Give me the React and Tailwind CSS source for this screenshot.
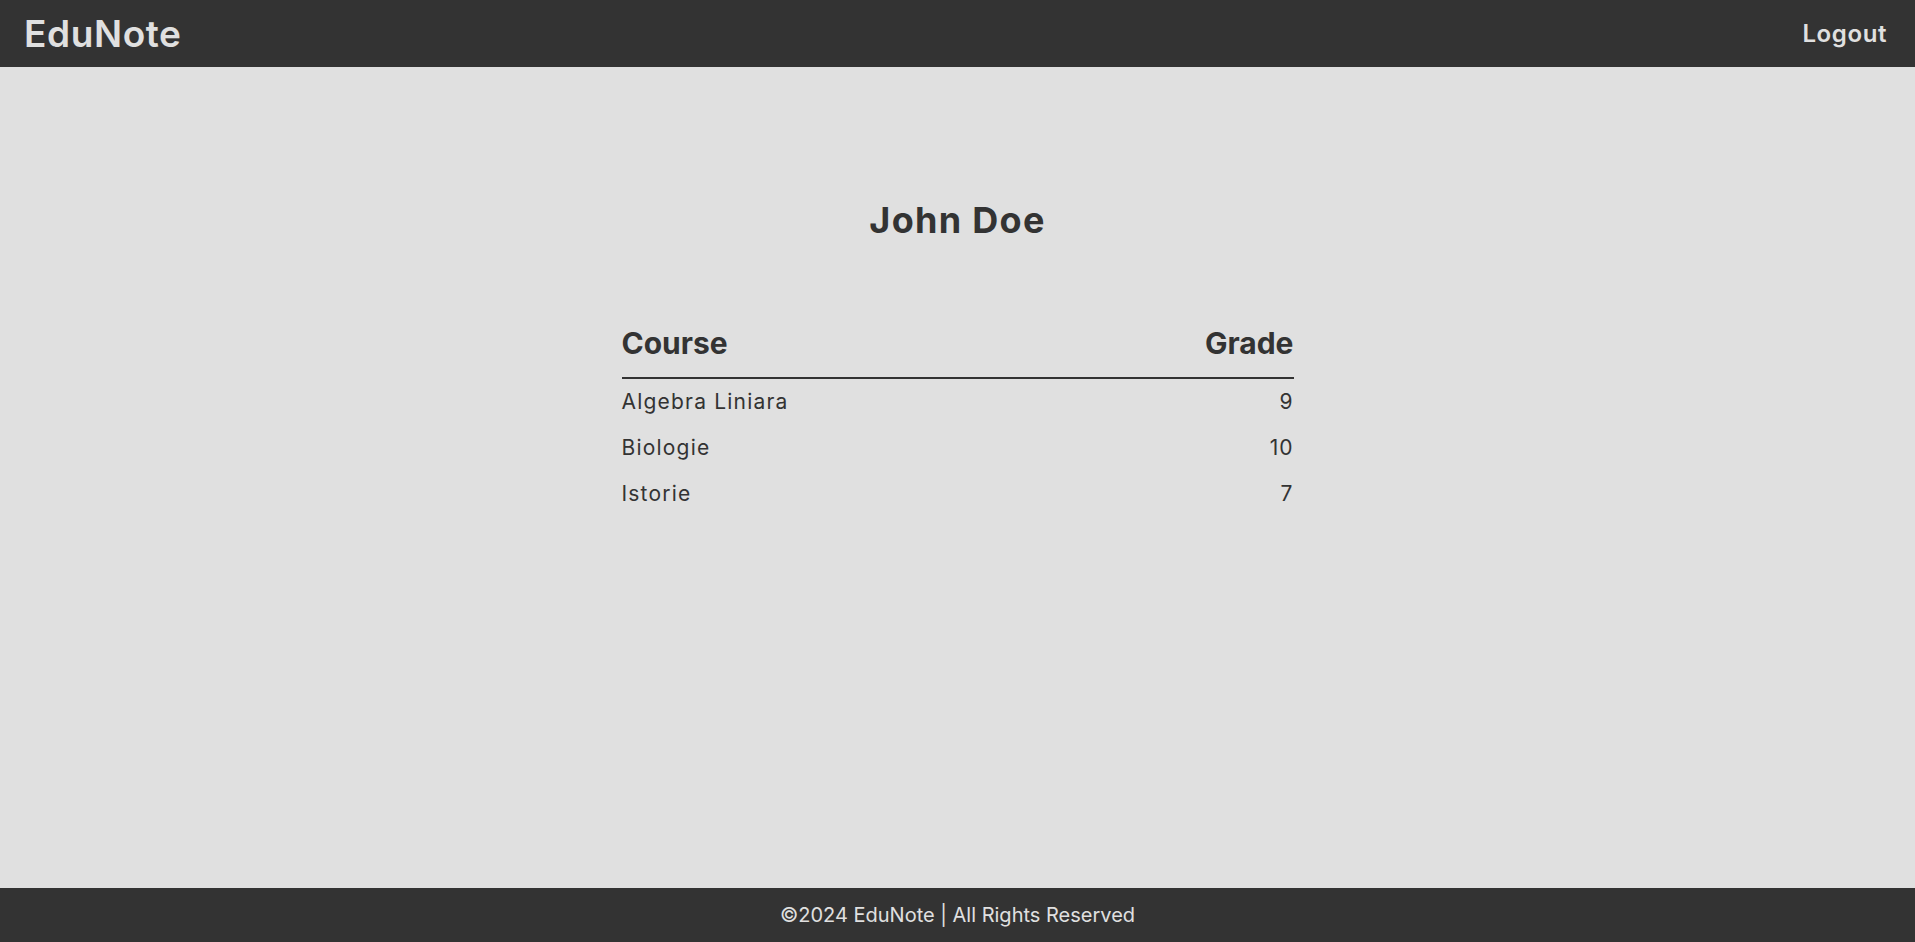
const grades = [
  { course: 'Algebra Liniara', grade: 9 },
  { course: 'Biologie', grade: 10 },
  { course: 'Istorie', grade: 7 },
];

export default function App() {
  return (
    <div className="min-h-screen flex flex-col bg-[#e0e0e0] text-[#333] font-['Inter',sans-serif]">
      <header className="h-[67px] bg-[#333] flex items-center justify-between pl-[24px] pr-[28px]">
        <span className="text-[37px] font-semibold text-[#e0e0e0] tracking-[0.6px]">EduNote</span>
        <button className="text-[24px] font-semibold text-[#e0e0e0] tracking-[0.6px]">Logout</button>
      </header>

      <main className="flex-1 flex flex-col items-center pt-[130px]">
        <h1 className="text-[36px] leading-[46px] font-bold tracking-[1.3px]">John Doe</h1>
        <table className="w-[672px] mt-[71px] border-collapse">
          <thead>
            <tr className="border-b-2 border-[#333]">
              <th className="text-left text-[30px] leading-[34px] font-bold pt-[12px] pb-[17px]">Course</th>
              <th className="text-right text-[30px] leading-[34px] font-bold pt-[12px] pb-[17px]">Grade</th>
            </tr>
          </thead>
          <tbody>
            {grades.map((g) => (
              <tr key={g.course}>
                <td className="text-left text-[21px] leading-[26px] tracking-[1.2px] py-[10px]">{g.course}</td>
                <td className="text-right text-[21px] leading-[26px] tracking-[1px] py-[10px]">{g.grade}</td>
              </tr>
            ))}
          </tbody>
        </table>
      </main>

      <footer className="h-[54px] bg-[#333] flex items-center justify-center">
        <p className="text-[20px] text-[#e0e0e0]">©2024 EduNote | All Rights Reserved</p>
      </footer>
    </div>
  );
}
